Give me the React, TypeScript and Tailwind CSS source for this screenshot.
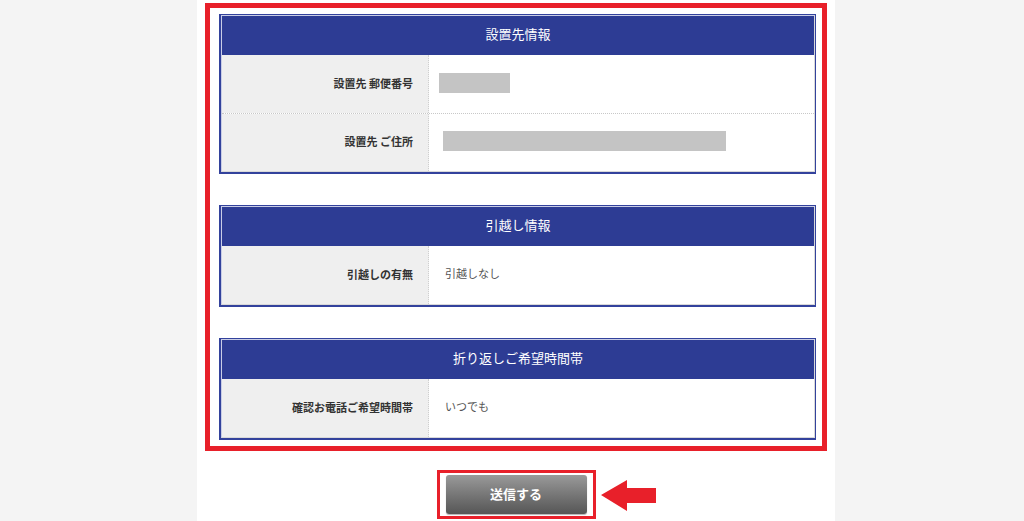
const sections = [
  {
    title: "設置先情報",
    rows: [
      { label: "設置先 郵便番号", blank: 71, shift: -6 },
      { label: "設置先 ご住所", blank: 283, shift: -2 },
    ],
  },
  {
    title: "引越し情報",
    rows: [{ label: "引越しの有無", value: "引越しなし" }],
  },
  {
    title: "折り返しご希望時間帯",
    rows: [{ label: "確認お電話ご希望時間帯", value: "いつでも" }],
  },
];

type Row = { label: string; value?: string; blank?: number; shift?: number };

function InfoTable({ title, rows }: { title: string; rows: Row[] }) {
  return (
    <div className="w-[597px] border border-b-2 border-l-2 border-[#33429c] bg-white">
      <div className="border border-t-[#c9cde6] border-l-[#c9cde6] border-r-[#d9d9d9] border-b-[#d9d9d9]">
        <div className="flex h-[39px] items-center justify-center bg-[#2d3c94] pb-[4px] text-[13px] text-white">
          {title}
        </div>
        {rows.map((r, i) => (
          <div
            key={r.label}
            className={`flex h-[58px] ${i > 0 ? "border-t border-dotted border-[#c8c8c8]" : ""}`}
          >
            <div className="flex w-[207px] items-center justify-end border-r border-dotted border-[#cfcfcf] bg-[#efefef] pb-[2px] pr-[15px] text-[11px] font-bold text-[#333]">
              {r.label}
            </div>
            <div className="flex flex-1 items-center pb-[3px] pl-[16px] text-[11px] text-[#555]">
              {r.blank ? (
                <div
                  className="h-[20px] bg-[#c4c4c4]"
                  style={{ width: r.blank, marginLeft: r.shift }}
                />
              ) : (
                r.value
              )}
            </div>
          </div>
        ))}
      </div>
    </div>
  );
}

export default function App() {
  return (
    <div
      className="min-h-[521px] bg-[#f4f4f4]"
      style={{ fontFamily: '"Noto Sans CJK JP", "Noto Sans", sans-serif' }}
    >
      <div className="ml-[197px] flex h-[521px] w-[638px] flex-col items-center bg-white pt-[3px]">
        <div className="flex w-[622px] flex-col gap-[31px] border-[5px] border-[#e8202a] pb-[6px] pl-[9px] pt-[6px]">
          {sections.map((s) => (
            <InfoTable key={s.title} title={s.title} rows={s.rows} />
          ))}
        </div>
        <div className="relative mt-[19px]">
          <div className="border-[3px] border-[#e8202a] bg-white px-[6px] py-[2px]">
            <button className="flex h-[39px] w-[141px] items-center justify-center rounded-[3px] bg-gradient-to-b from-[#9a9a9a] to-[#565656] pb-[2px] text-[13px] font-bold text-white shadow-[0_1px_1px_rgba(0,0,0,0.3)]">
              送信する
            </button>
          </div>
          <svg
            className="absolute left-[164px] top-[10px]"
            width="55"
            height="32"
            viewBox="0 0 55 32"
          >
            <polygon points="0,15 26,0 26,8 55,8 55,23 26,23 26,31" fill="#e8202a" />
          </svg>
        </div>
      </div>
    </div>
  );
}
